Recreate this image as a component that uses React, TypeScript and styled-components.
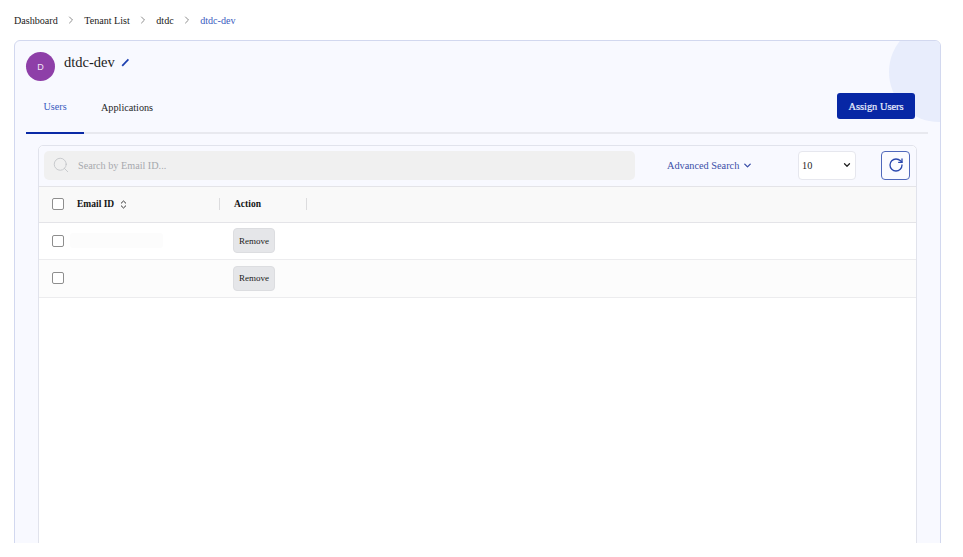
import React from "react";
import styled, { createGlobalStyle } from "styled-components";
import { ChevronRight, ChevronDown, RotateCw, Search } from "lucide-react";

const Global = createGlobalStyle`
  html, body { margin: 0; padding: 0; background: #fff; height: 557px; overflow: hidden; }
  body { font-family: "Liberation Serif", "Times New Roman", serif; color: #1a1a1a; }
  * { box-sizing: border-box; }
`;

const Page = styled.div`
  width: 963px;
  height: 543px;
  padding: 0 22px 0 14px;
  overflow: hidden;
`;

const Crumbs = styled.nav`
  height: 40px;
  display: flex;
  align-items: center;
  font-size: 10.1px;
`;

const Crumb = styled.span<{ $active?: boolean }>`
  color: ${(p) => (p.$active ? "#3a5cc0" : "#1a1a1a")};
`;

const CrumbSep = styled.span`
  display: flex;
  width: 26.5px;
  justify-content: center;
  color: #8d8d8d;
`;

const Card = styled.section`
  position: relative;
  height: 560px;
  padding: 0 12px 0 11px;
  background: #f8f9ff;
  border: 1px solid #d2d8ef;
  border-radius: 6px;
  overflow: hidden;
`;

const Blob = styled.div`
  position: absolute;
  top: -19px;
  right: -49px;
  width: 100px;
  height: 100px;
  border-radius: 50%;
  background: #e8edfc;
`;

const Heading = styled.div`
  position: relative;
  display: flex;
  align-items: flex-start;
  height: 51px;
  padding-top: 11px;
`;

const Avatar = styled.div`
  width: 29px;
  height: 29px;
  border-radius: 50%;
  background: #8e3fa8;
  color: #f2e6f6;
  font-family: "Liberation Sans", Arial, sans-serif;
  font-size: 9px;
  display: flex;
  align-items: center;
  justify-content: center;
`;

const Title = styled.h1`
  margin: 0 0 0 9px;
  font-size: 14.5px;
  line-height: 20px;
  font-weight: 400;
  color: #1c1c1c;
`;

const EditMark = styled.svg`
  margin: 6px 0 0 6px;
`;

const TabRow = styled.div`
  position: relative;
  display: flex;
  height: 41.5px;
  border-bottom: 2px solid #e8e9ef;
`;

const Tab = styled.div<{ $active?: boolean }>`
  height: 41.5px;
  width: ${(p) => (p.$active ? "58px" : "auto")};
  padding: ${(p) => (p.$active ? "9px 0 0" : "10px 0 0 17px")};
  font-size: 10.2px;
  line-height: 12px;
  text-align: center;
  color: ${(p) => (p.$active ? "#3a5cc0" : "#1f1f1f")};
  border-bottom: ${(p) => (p.$active ? "2px solid #0a2aa6" : "none")};
`;

const AssignButton = styled.button`
  position: absolute;
  right: 13px;
  top: 1px;
  width: 78px;
  height: 26px;
  padding: 0;
  border: 0;
  border-radius: 3px;
  background: #0727a5;
  color: #eef1ff;
  font-family: inherit;
  font-size: 10.4px;
  font-weight: 400;
  -webkit-text-stroke: 0.2px #eef1ff;
`;

const Panel = styled.div`
  margin: 11.5px 12px 0;
  width: 879px;
  height: 440px;
  background: #fff;
  border: 1px solid #e1e3ec;
  border-radius: 5px 5px 0 0;
`;

const Toolbar = styled.div`
  display: flex;
  align-items: center;
  height: 40px;
  padding: 0 5px 1.5px;
  background: #f8f9ff;
  border-radius: 5px 5px 0 0;
`;

const SearchBox = styled.div`
  display: flex;
  align-items: center;
  flex: none;
  width: 591px;
  height: 29px;
  padding-left: 8px;
  border-radius: 5px;
  background: #f0f0f0;
  color: #a6a8ad;
  font-size: 10.2px;
`;

const SearchText = styled.span`
  margin-left: 8px;
`;

const AdvancedLink = styled.div`
  display: flex;
  flex: none;
  align-items: center;
  gap: 3px;
  width: 131px;
  margin-left: 32px;
  color: #3b4fa8;
  font-size: 10.3px;
  white-space: nowrap;
`;

const PageSize = styled.div`
  display: flex;
  flex: none;
  align-items: center;
  justify-content: space-between;
  width: 58px;
  height: 29px;
  padding: 0 3px;
  background: #fff;
  border: 1px solid #e6e7ee;
  border-radius: 4px;
  color: #1f1f1f;
  font-size: 10.3px;
`;

const RefreshButton = styled.button`
  display: flex;
  flex: none;
  align-items: center;
  justify-content: center;
  width: 29px;
  height: 29px;
  margin-left: 25px;
  padding: 0;
  background: #fbfbff;
  border: 1px solid #5068bb;
  border-radius: 4px;
  color: #2a47ae;
`;

const Row = styled.div<{ $head?: boolean; $alt?: boolean }>`
  display: flex;
  align-items: center;
  height: ${(p) => (p.$head ? "36.5px" : "37.5px")};
  padding-left: 13px;
  background: ${(p) => (p.$head ? "#f9f9f9" : p.$alt ? "#fcfcfc" : "#fff")};
  border-top: ${(p) => (p.$head ? "1px solid #e4e4e8" : "none")};
  border-bottom: 1px solid ${(p) => (p.$head ? "#e4e4e8" : "#ececee")};
`;

const Check = styled.span`
  flex: none;
  width: 12px;
  height: 12px;
  border: 1.5px solid #8e8e8e;
  border-radius: 2px;
  background: #fff;
`;

const EmailHead = styled.div`
  display: flex;
  align-items: center;
  width: 143px;
  margin-left: 13px;
  height: 12px;
  font-size: 9.5px;
  font-weight: 700;
  color: #141414;
  border-right: 1px solid #dcdcde;
`;

const SortIcon = styled.svg`
  margin-left: 6px;
`;

const ActionHead = styled.div`
  width: 87px;
  height: 12px;
  padding-left: 14px;
  font-size: 9.5px;
  line-height: 12px;
  font-weight: 700;
  color: #141414;
  border-right: 1px solid #dcdcde;
`;

const EmailCell = styled.div`
  flex: none;
  width: 169px;
  padding-left: 6px;
`;

const Redacted = styled.div`
  width: 93px;
  height: 15px;
  border-radius: 3px;
  background: #fcfcfc;
`;

const RemoveButton = styled.button`
  width: 42px;
  height: 25px;
  padding: 0;
  border: 1px solid #dcdde0;
  border-radius: 4px;
  background: #e5e6e9;
  color: #222;
  font-family: inherit;
  font-size: 9px;
`;

const rows = [{ id: 1, redacted: true }, { id: 2, redacted: false }];

export default function App() {
  return (
    <>
      <Global />
      <Page>
        <Crumbs>
          <Crumb>Dashboard</Crumb>
          <CrumbSep><ChevronRight size={12} /></CrumbSep>
          <Crumb>Tenant List</Crumb>
          <CrumbSep><ChevronRight size={12} /></CrumbSep>
          <Crumb>dtdc</Crumb>
          <CrumbSep><ChevronRight size={12} /></CrumbSep>
          <Crumb $active>dtdc-dev</Crumb>
        </Crumbs>
        <Card>
          <Blob />
          <Heading>
            <Avatar>D</Avatar>
            <Title>dtdc-dev</Title>
            <EditMark width="9" height="9" viewBox="0 0 9 9" fill="none" stroke="#1c3fb0">
              <path d="M1.2 7.8 7.4 1.4" strokeWidth="1.7" />
            </EditMark>
          </Heading>
          <TabRow>
            <Tab $active>Users</Tab>
            <Tab>Applications</Tab>
            <AssignButton>Assign Users</AssignButton>
          </TabRow>
          <Panel>
            <Toolbar>
              <SearchBox>
                <Search size={18} strokeWidth={1.1} color="#c0c2c6" />
                <SearchText>Search by Email ID...</SearchText>
              </SearchBox>
              <AdvancedLink>Advanced Search <ChevronDown size={11} strokeWidth={3} /></AdvancedLink>
              <PageSize>10 <ChevronDown size={10} strokeWidth={3} color="#222" /></PageSize>
              <RefreshButton><RotateCw size={16} strokeWidth={2} /></RefreshButton>
            </Toolbar>
            <Row $head>
              <Check />
              <EmailHead>
                Email ID
                <SortIcon width="7" height="9" viewBox="0 0 7 9" fill="none" stroke="#333" strokeWidth="1">
                  <path d="M1 3.4 3.5 1 6 3.4M1 5.6 3.5 8 6 5.6" />
                </SortIcon>
              </EmailHead>
              <ActionHead>Action</ActionHead>
            </Row>
            {rows.map((r) => (
              <Row key={r.id} $alt={!r.redacted}>
                <Check />
                <EmailCell>{r.redacted && <Redacted />}</EmailCell>
                <RemoveButton>Remove</RemoveButton>
              </Row>
            ))}
          </Panel>
        </Card>
      </Page>
    </>
  );
}
